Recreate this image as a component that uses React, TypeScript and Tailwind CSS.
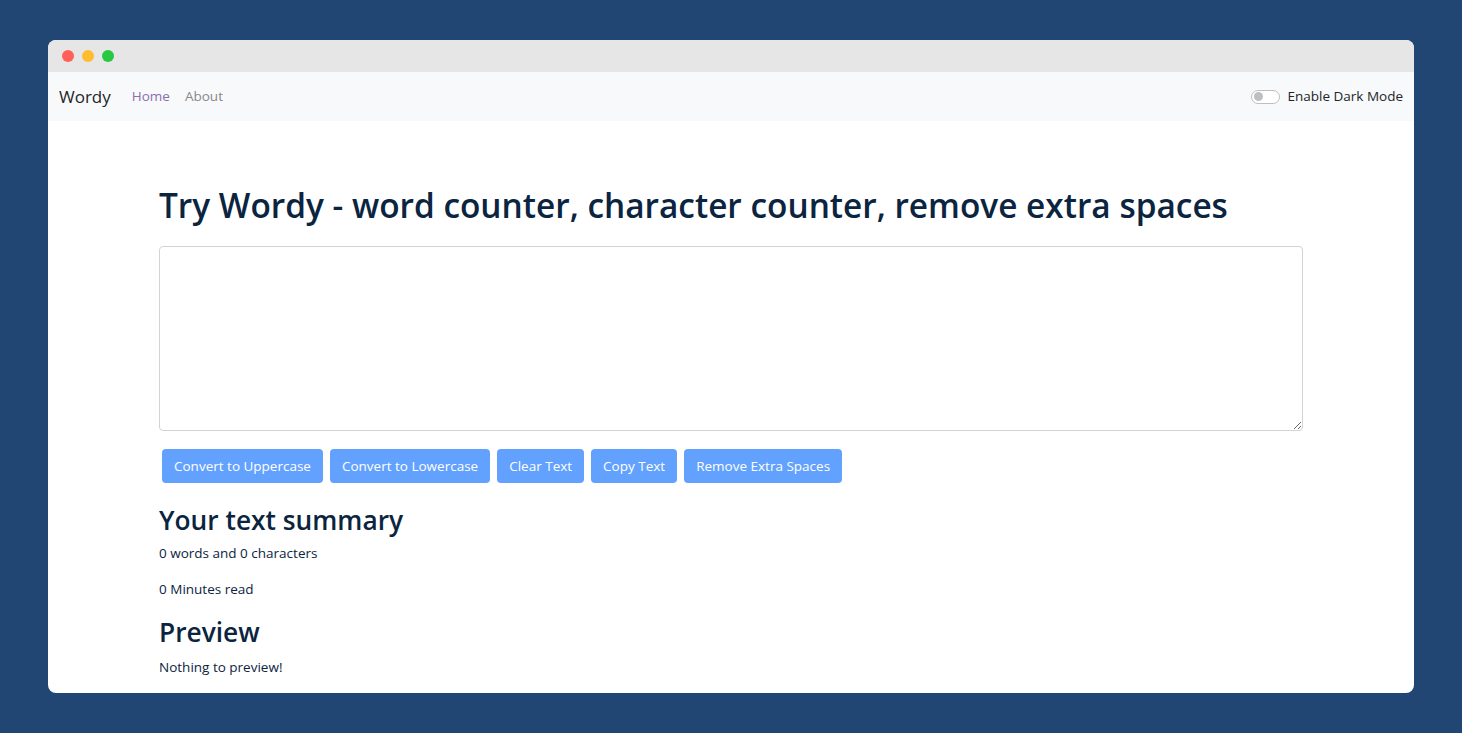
import { useState } from "react";

const buttons = [
    "Convert to Uppercase",
    "Convert to Lowercase",
    "Clear Text",
    "Copy Text",
    "Remove Extra Spaces",
];

export default function App() {
    const [text, setText] = useState("");
    const [dark, setDark] = useState(false);

    const words = text.split(/\s+/).filter((w) => w.length > 0).length;

    return (
        <div
            className="min-h-[733px] bg-[#224673] px-[48px] pt-[40px] pb-[40px]"
            style={{ fontFamily: '"Open Sans", "Noto Sans", sans-serif' }}
        >
            <div className="h-[653px] overflow-hidden rounded-lg bg-white">
                {/* title bar */}
                <div className="flex h-[32px] items-center gap-[8px] bg-[#e6e6e6] pl-[14px]">
                    <span className="h-[12px] w-[12px] rounded-full bg-[#ff5f57]" />
                    <span className="h-[12px] w-[12px] rounded-full bg-[#febc2e]" />
                    <span className="h-[12px] w-[12px] rounded-full bg-[#28c840]" />
                </div>

                {/* navbar */}
                <nav className="flex h-[49px] items-center bg-[#f8f9fa] pr-[11px] pl-[11px]">
                    <span className="mr-[21px] text-[17px] text-[#212529]">Wordy</span>
                    <a className="mr-[15px] text-[13.5px] text-[#8a6fa8]">Home</a>
                    <a className="text-[13.5px] text-[#888]">About</a>
                    <label className="ml-auto flex items-center gap-[7px] text-[13.5px] text-[#212529]">
                        <button
                            onClick={() => setDark(!dark)}
                            className="flex h-[14px] w-[29px] items-center rounded-full border border-[#bfbfbf] bg-white px-[2px]"
                        >
                            <span className="h-[9px] w-[9px] rounded-full bg-[#bfbfbf]" />
                        </button>
                        Enable Dark Mode
                    </label>
                </nav>

                {/* main */}
                <div className="mx-[111px] pt-[58px] text-[#0b2440]">
                    <h1 className="text-[33.4px] leading-[52px] font-semibold">
                        Try Wordy - word counter, character counter, remove extra spaces
                    </h1>
                    <textarea
                        value={text}
                        onChange={(e) => setText(e.target.value)}
                        className="mt-[15px] block h-[185px] w-full rounded border border-[#ced4da] px-3 py-2 outline-none"
                    />
                    <div className="mt-[18px] flex gap-[7px] pl-[3px]">
                        {buttons.map((b) => (
                            <button
                                key={b}
                                className="h-[34px] rounded bg-[#62a1fe] px-[12px] text-[13.5px] text-white"
                            >
                                {b}
                            </button>
                        ))}
                    </div>
                    <h2 className="mt-[20px] text-[26.3px] leading-[34px] font-semibold">
                        Your text summary
                    </h2>
                    <p className="mt-[6px] text-[13.5px] leading-[20px]">
                        {words} words and {text.length} characters
                    </p>
                    <p className="mt-[16px] text-[13.5px] leading-[20px]">
                        {0.008 * words} Minutes read
                    </p>
                    <h2 className="mt-[16px] text-[26.3px] leading-[34px] font-semibold">
                        Preview
                    </h2>
                    <p className="mt-[8px] text-[13.5px] leading-[20px]">
                        {text.length > 0 ? text : "Nothing to preview!"}
                    </p>
                </div>
            </div>
        </div>
    );
}
